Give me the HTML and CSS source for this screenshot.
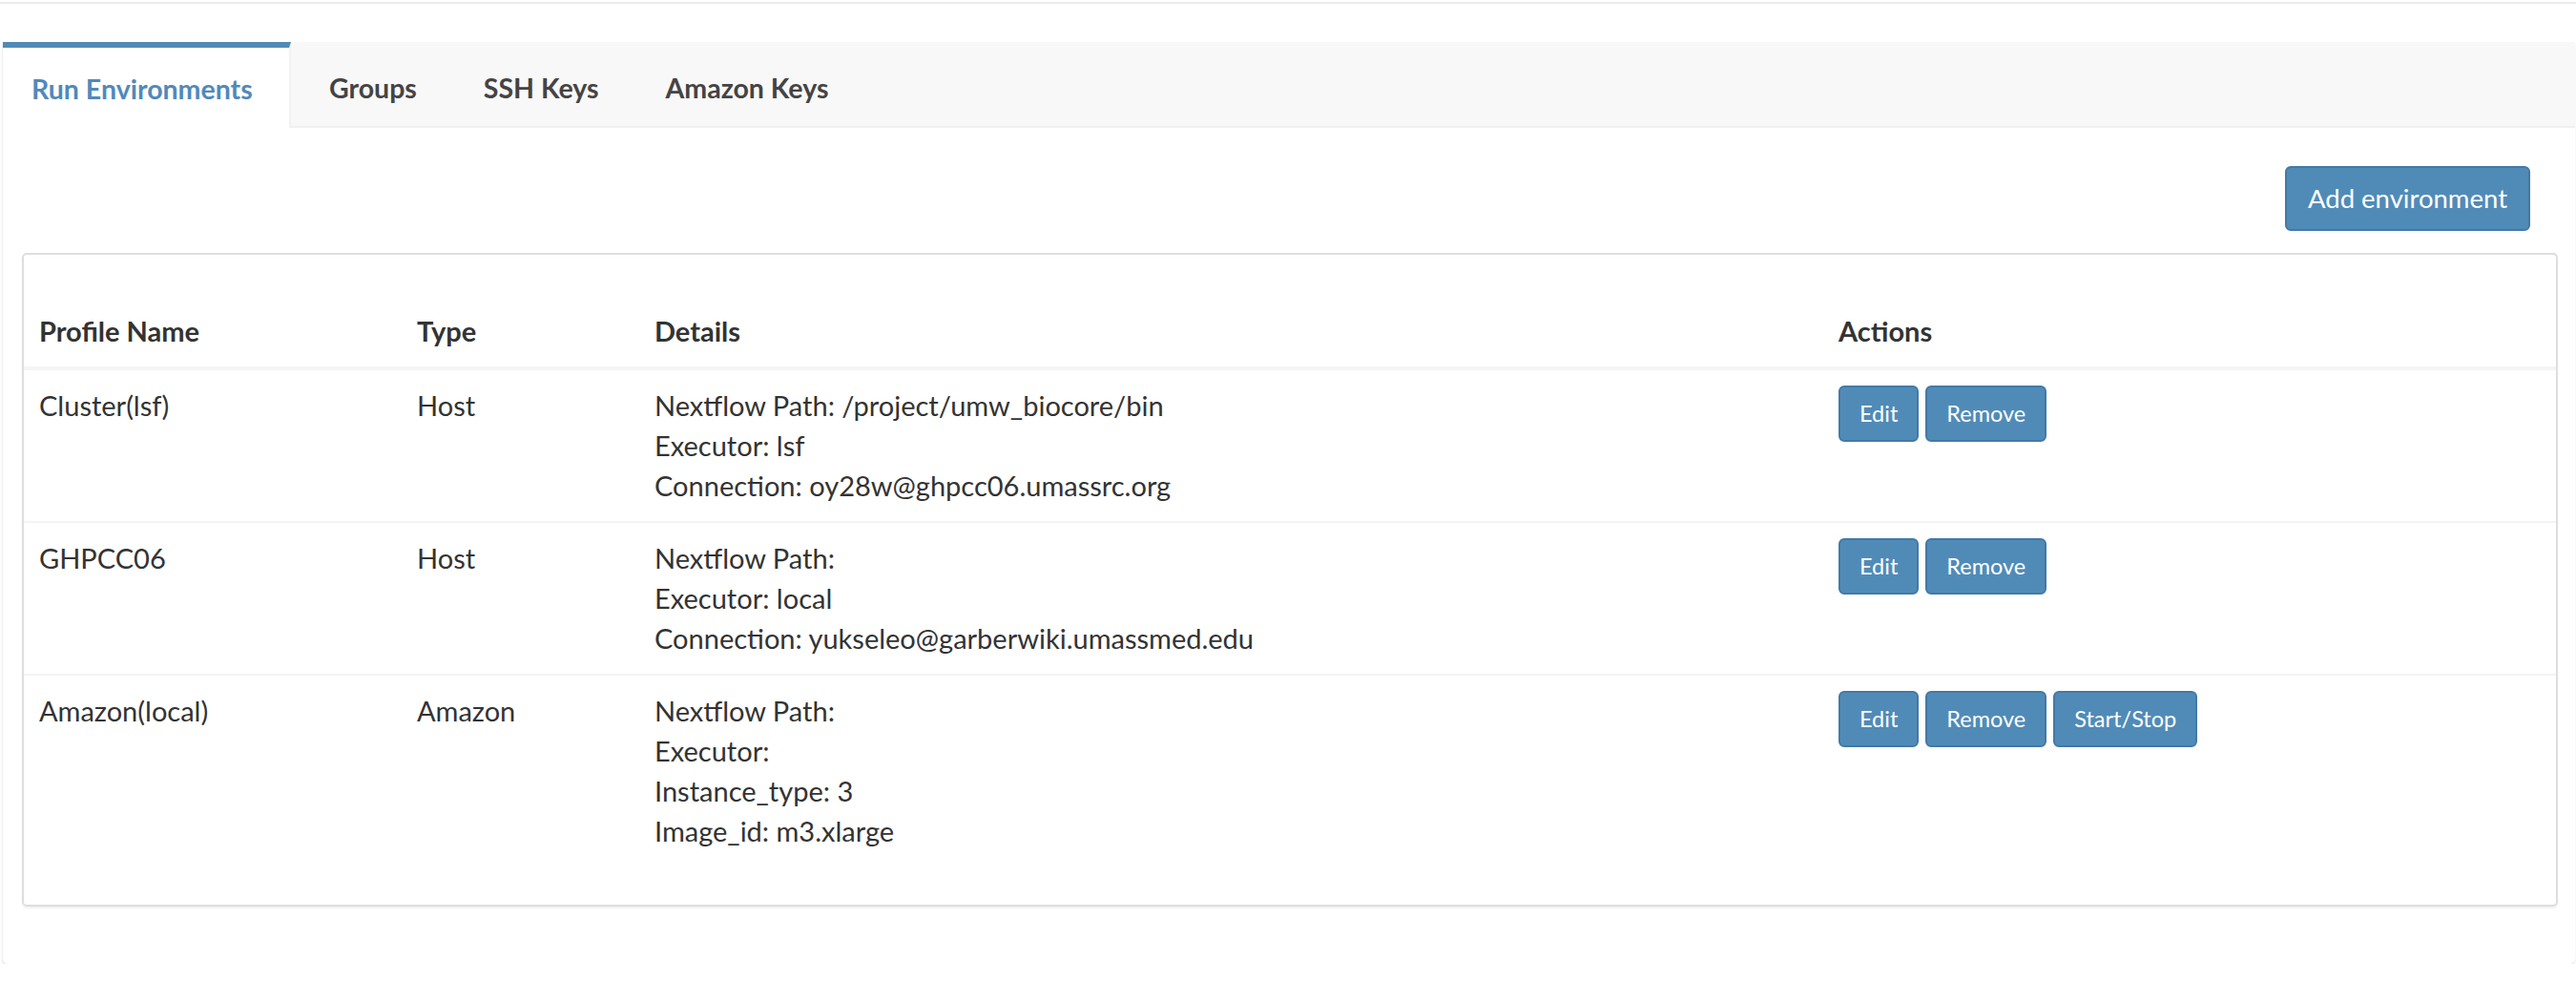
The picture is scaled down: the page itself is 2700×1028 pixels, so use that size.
FILE: index.html
```html
<!DOCTYPE html>
<html lang="en">
<head>
<meta charset="utf-8">
<title>Run Environments</title>
<link rel="stylesheet" href="styles.css">
</head>
<body>
<div class="topline"></div>
<div class="panel">
  <ul class="tabs">
    <li class="tab active">Run Environments</li>
    <li class="tab">Groups</li>
    <li class="tab">SSH Keys</li>
    <li class="tab">Amazon Keys</li>
  </ul>
  <div class="tab-content">
    <div class="toolbar">
      <button class="btn btn-add">Add environment</button>
    </div>
    <div class="box">
      <table class="env-table">
        <colgroup>
          <col class="col-name">
          <col class="col-type">
          <col class="col-details">
          <col class="col-actions">
        </colgroup>
        <thead>
          <tr>
            <th>Profile Name</th>
            <th>Type</th>
            <th>Details</th>
            <th>Actions</th>
          </tr>
        </thead>
        <tbody>
          <tr>
            <td>Cluster(lsf)</td>
            <td>Host</td>
            <td>
              <div>Nextflow Path: /project/umw_biocore/bin</div>
              <div>Executor: lsf</div>
              <div>Connection: oy28w@ghpcc06.umassrc.org</div>
            </td>
            <td>
              <div class="actions">
                <button class="btn btn-sm">Edit</button>
                <button class="btn btn-sm">Remove</button>
              </div>
            </td>
          </tr>
          <tr>
            <td>GHPCC06</td>
            <td>Host</td>
            <td>
              <div>Nextflow Path: </div>
              <div>Executor: local</div>
              <div>Connection: yukseleo@garberwiki.umassmed.edu</div>
            </td>
            <td>
              <div class="actions">
                <button class="btn btn-sm">Edit</button>
                <button class="btn btn-sm">Remove</button>
              </div>
            </td>
          </tr>
          <tr>
            <td>Amazon(local)</td>
            <td>Amazon</td>
            <td>
              <div>Nextflow Path: </div>
              <div>Executor: </div>
              <div>Instance_type: 3</div>
              <div>Image_id: m3.xlarge</div>
            </td>
            <td>
              <div class="actions">
                <button class="btn btn-sm">Edit</button>
                <button class="btn btn-sm">Remove</button>
                <button class="btn btn-sm">Start/Stop</button>
              </div>
            </td>
          </tr>
        </tbody>
      </table>
    </div>
  </div>
</div>
</body>
</html>
```

FILE: styles.css
```css
* {
  box-sizing: border-box;
}

body {
  margin: 0;
  background: #ffffff;
  color: #333333;
  font-family: "Lato", "Open Sans", sans-serif;
  font-size: 29px;
}

.topline {
  height: 2px;
  margin-top: 2px;
  background: #ececec;
}

.panel {
  margin: 40px 1px 0 2px;
  border-left: 1px solid #f1f1f1;
  border-radius: 0 0 6px 6px;
  box-shadow: 0 2px 2px rgba(0, 0, 0, 0.1);
  background: #ffffff;
}

.tabs {
  display: flex;
  margin: 0;
  padding: 0;
  list-style: none;
  height: 90px;
  background: #f8f8f8;
  border-bottom: 2px solid #f1f1f1;
}

.tab {
  display: flex;
  align-items: center;
  padding: 2px 30px 0;
  margin-right: 10px;
  border-top: 6px solid transparent;
  font-weight: 700;
  font-size: 28.5px;
  color: #444444;
}

.tab.active {
  width: 302px;
  margin-bottom: -2px;
  background: #ffffff;
  border-top-color: #508bb8;
  border-right: 2px solid #f1f1f1;
  color: #5089bb;
}

.tab-content {
  padding: 40px 18px 60px 20px;
}

.toolbar {
  display: flex;
  justify-content: flex-end;
  padding-right: 29px;
  margin-bottom: 23px;
}

.btn {
  background: #508bb8;
  border: 2px solid #4379a6;
  border-radius: 6px;
  color: #ffffff;
  font-family: inherit;
  cursor: pointer;
}

.btn-add {
  height: 68px;
  padding: 0 22px;
  font-size: 27.5px;
  line-height: 64px;
}

.btn-sm {
  height: 59px;
  padding: 0 20px;
  font-size: 23.5px;
  line-height: 55px;
}

.box {
  border: 2px solid #dedede;
  border-radius: 5px;
  box-shadow: 0 2px 2px rgba(0, 0, 0, 0.06);
  padding: 43px 0 40px;
}

.env-table {
  width: 100%;
  table-layout: fixed;
  border-collapse: separate;
  border-spacing: 0;
}

.col-name {
  width: 396px;
}

.col-type {
  width: 249px;
}

.col-details {
  width: 1241px;
}

.env-table th,
.env-table td {
  padding: 16px;
  line-height: 42px;
  text-align: left;
  vertical-align: top;
}

.env-table th {
  font-weight: 700;
  border-bottom: 4px solid #f4f4f4;
}

.env-table tbody tr + tr td {
  border-top: 2px solid #f4f4f4;
}

.actions {
  display: flex;
  gap: 7px;
}
```
